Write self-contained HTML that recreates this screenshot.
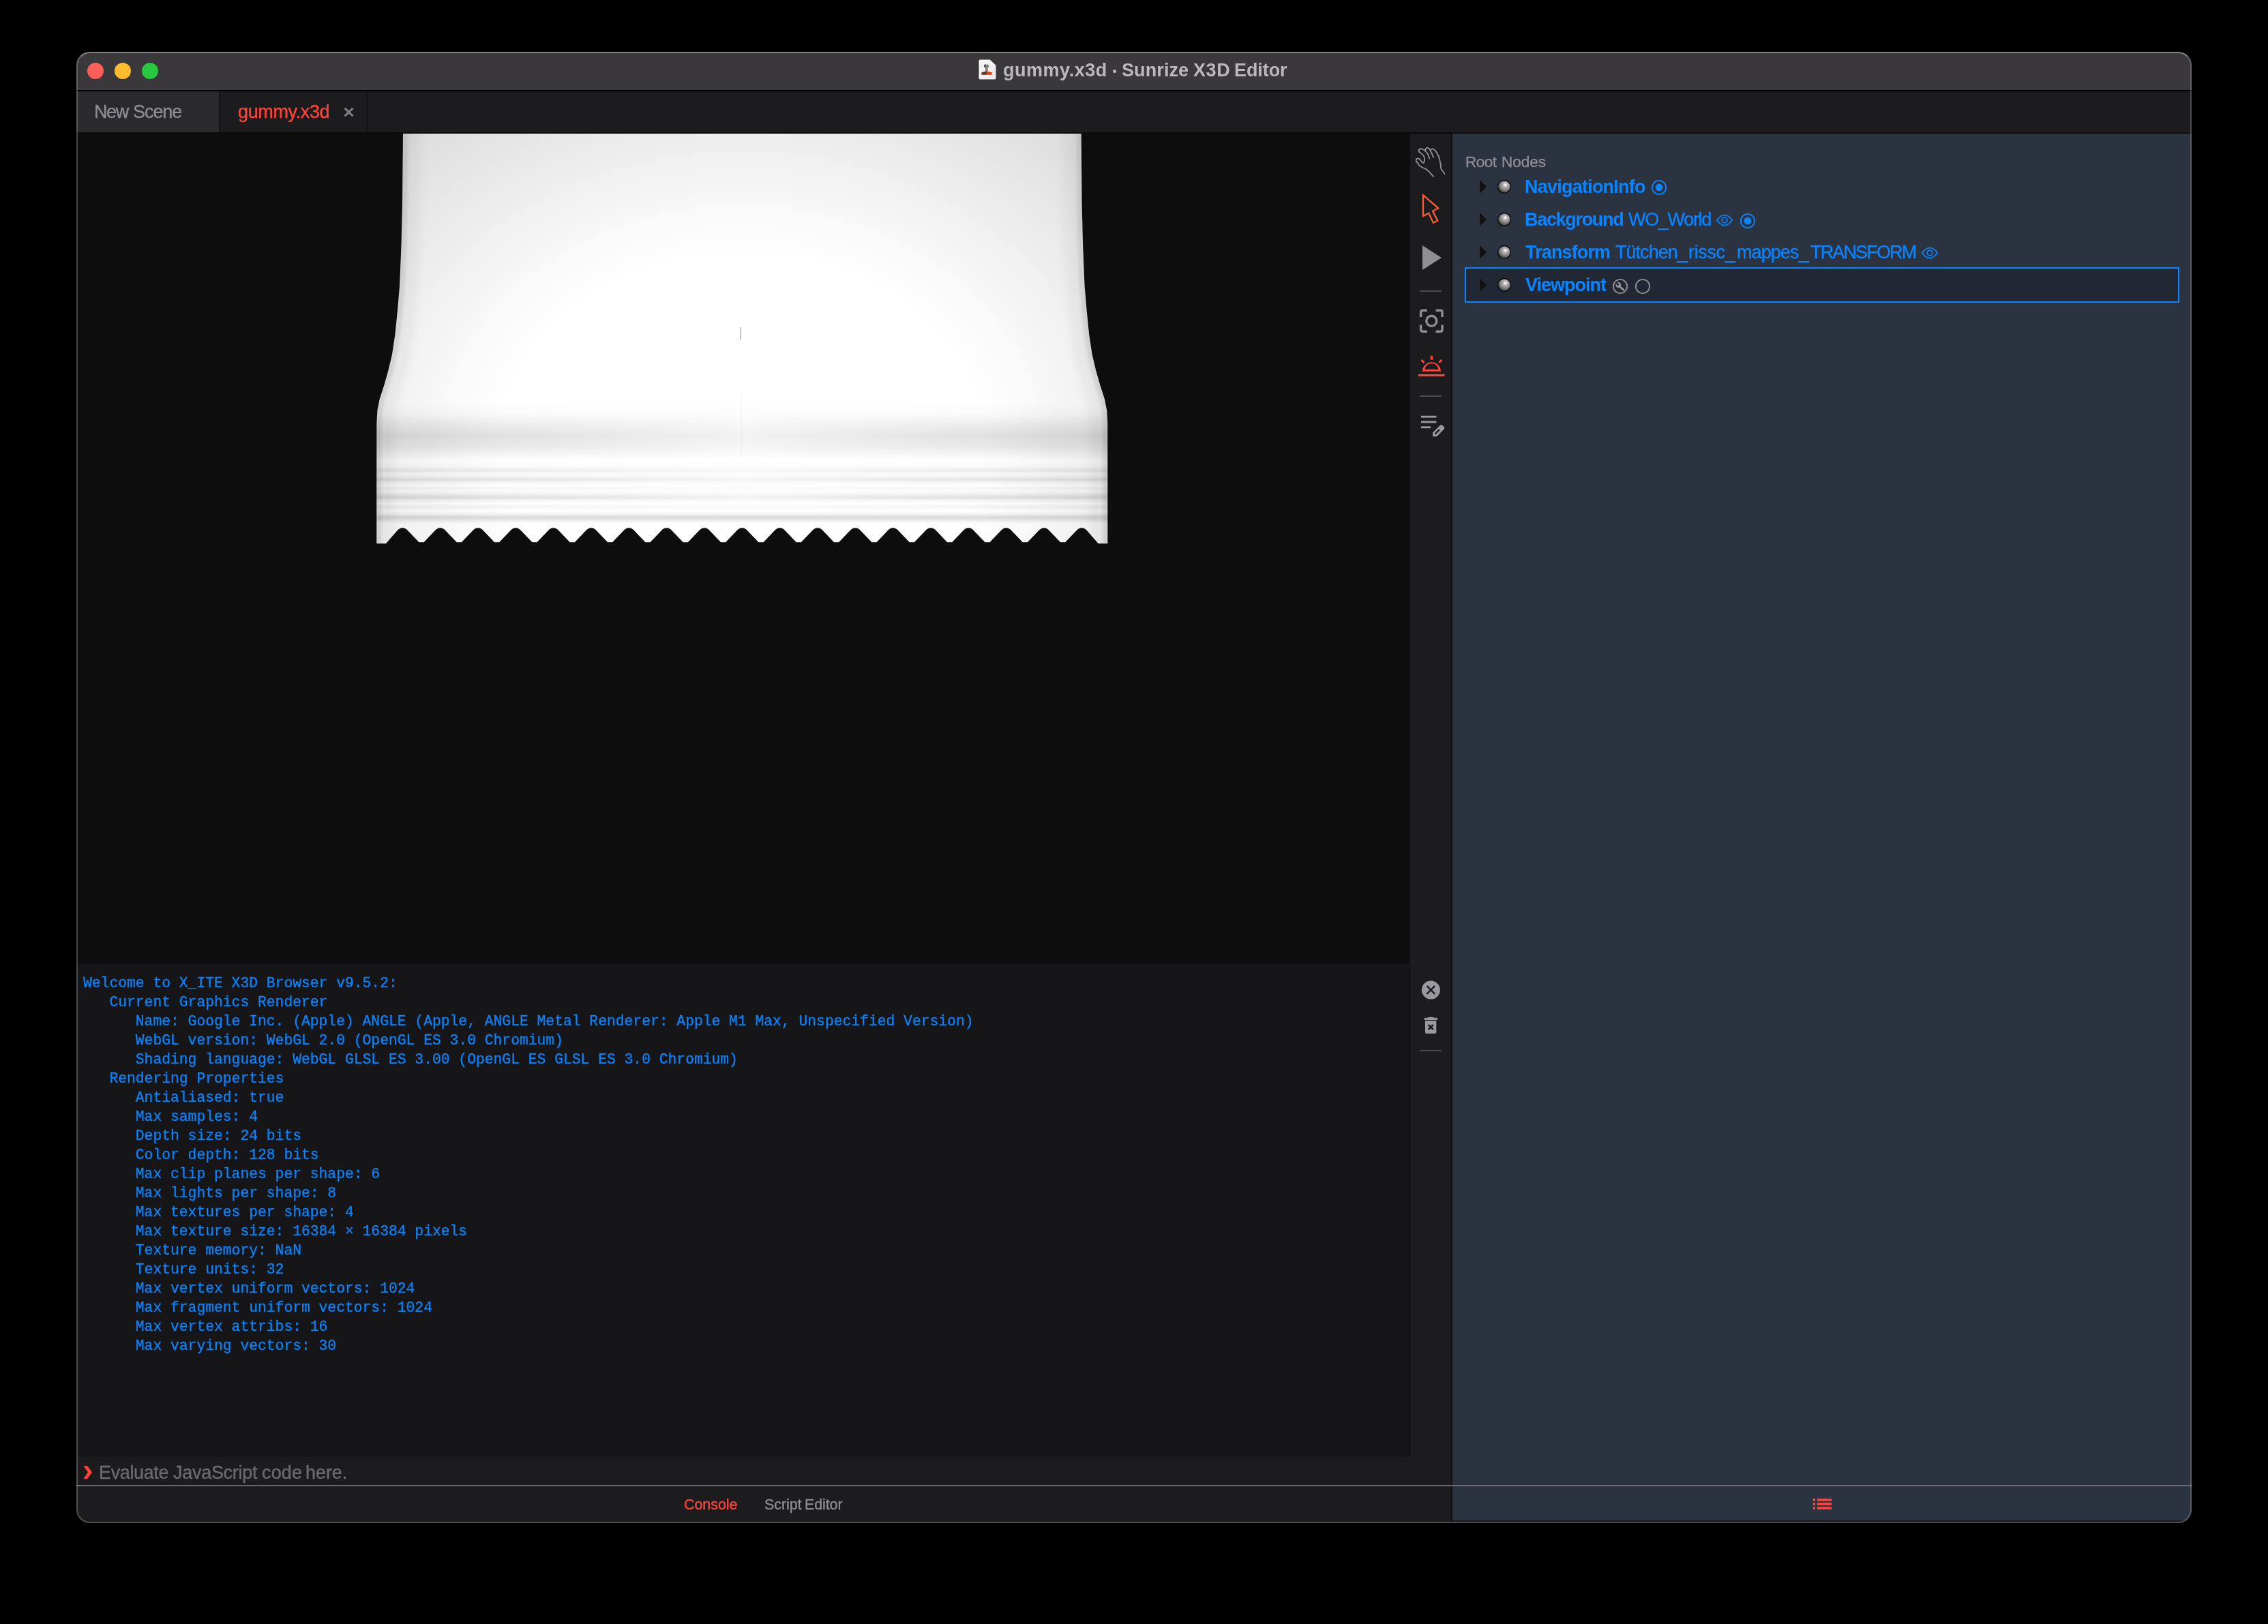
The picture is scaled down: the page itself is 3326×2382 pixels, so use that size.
<!DOCTYPE html>
<html><head><meta charset="utf-8"><title>gummy.x3d · Sunrize X3D Editor</title>
<style>
html,body{margin:0;padding:0;background:#000;}
body{width:3326px;height:2382px;overflow:hidden;position:relative;font-family:"Liberation Sans",sans-serif;}
#win{position:absolute;left:112px;top:76px;width:3102px;height:2158px;border-radius:20px;overflow:hidden;background:#1c1c1e;}
#in{position:absolute;left:-112px;top:-76px;width:3326px;height:2382px;}
.b{position:absolute;}
.t{position:absolute;white-space:pre;line-height:1;will-change:transform;}
.m{font-family:"Liberation Mono",monospace;}
svg{position:absolute;overflow:visible;}
#frame{position:absolute;left:112px;top:76px;width:3102px;height:2158px;border-radius:20px;box-sizing:border-box;border:2px solid rgba(255,255,255,0.225);border-top-color:rgba(255,255,255,0.36);pointer-events:none;}
</style></head><body>
<div id="win"><div id="in">

<div class="b" style="left:112px;top:76px;width:3102px;height:56px;background:#3a383b;"></div>
<div class="b" style="left:112px;top:132px;width:3102px;height:2px;background:linear-gradient(#000 0,#000 60%,#121213 100%);"></div>
<div class="b" style="left:112px;top:134px;width:3102px;height:60px;background:#1c1c1e;"></div>
<div class="b" style="left:112px;top:134px;width:209px;height:60px;background:#2a2a2c;"></div>
<div class="b" style="left:321px;top:134px;width:2px;height:60px;background:#111113;"></div>
<div class="b" style="left:538px;top:134px;width:2px;height:60px;background:#111113;"></div>
<div class="b" style="left:112px;top:194px;width:3102px;height:2px;background:#0c0c0d;"></div>
<div class="b" style="left:112px;top:194px;width:1956px;height:1220px;background:#0d0d0d;"></div>
<div class="b" style="left:112px;top:1413px;width:1954px;height:724px;background:#161618;border-top:1px solid #111112;box-sizing:border-box;"></div>
<div class="b" style="left:2068px;top:196px;width:60px;height:1982px;background:#1c1c1e;"></div>
<div class="b" style="left:2066px;top:1415px;width:2px;height:722px;background:#0f0f10;"></div>
<div class="b" style="left:2128px;top:196px;width:2px;height:2040px;background:#0e0e10;"></div>
<div class="b" style="left:2130px;top:196px;width:1084px;height:2040px;background:#2b3240;"></div>
<div class="b" style="left:2148px;top:392px;width:1048px;height:52px;box-sizing:border-box;border:2px solid #0a84ff;background:#212833;"></div>
<div class="b" style="left:112px;top:2137px;width:2016px;height:41px;background:#1c1c1e;"></div>
<div class="b" style="left:112px;top:2180px;width:2016px;height:56px;background:#1c1c1e;"></div>
<div class="b" style="left:112px;top:2178px;width:3102px;height:2px;background:#6b6b6b;"></div>
<div class="b" style="left:2130px;top:2230px;width:1084px;height:4px;background:#1b1b1d;"></div>
<div class="b" style="left:128px;top:92px;width:24px;height:24px;border-radius:12px;background:#ff5f57;"></div>
<div class="b" style="left:168px;top:92px;width:24px;height:24px;border-radius:12px;background:#febc2e;"></div>
<div class="b" style="left:208px;top:92px;width:24px;height:24px;border-radius:12px;background:#28c840;"></div>
<svg style="left:0;top:0;" width="3326" height="2382" viewBox="0 0 3326 2382">
<defs>
<clipPath id="bagc"><path d="M591.0,196.0 L590.0,300.0 L588.5,360.0 L586.0,420.0 L583.0,455.0 L579.5,490.0 L575.0,520.0 L569.0,545.0 L563.0,566.0 L556.8,585.0 L553.4,602.0 L552.4,620.0 L552.3,700.0 L552.3,780.0 L552.3,797.3 L566,797.3 L582.3,778.4 Q590.3,770.0 598.3,778.4 L614.4,795.3 L621.6,795.3 L637.6,778.4 Q645.6,770.0 653.6,778.4 L669.7,795.3 L676.9,795.3 L693.0,778.4 Q701.0,770.0 709.0,778.4 L725.0,795.3 L732.2,795.3 L748.3,778.4 Q756.3,770.0 764.3,778.4 L780.4,795.3 L787.6,795.3 L803.6,778.4 Q811.6,770.0 819.6,778.4 L835.7,795.3 L842.9,795.3 L859.0,778.4 Q867.0,770.0 875.0,778.4 L891.0,795.3 L898.2,795.3 L914.3,778.4 Q922.3,770.0 930.3,778.4 L946.4,795.3 L953.6,795.3 L969.6,778.4 Q977.6,770.0 985.6,778.4 L1001.7,795.3 L1008.9,795.3 L1025.0,778.4 Q1033.0,770.0 1041.0,778.4 L1057.0,795.3 L1064.2,795.3 L1080.3,778.4 Q1088.3,770.0 1096.3,778.4 L1112.4,795.3 L1119.6,795.3 L1135.6,778.4 Q1143.6,770.0 1151.6,778.4 L1167.7,795.3 L1174.9,795.3 L1191.0,778.4 Q1199.0,770.0 1207.0,778.4 L1223.0,795.3 L1230.2,795.3 L1246.3,778.4 Q1254.3,770.0 1262.3,778.4 L1278.4,795.3 L1285.6,795.3 L1301.6,778.4 Q1309.6,770.0 1317.6,778.4 L1333.7,795.3 L1340.9,795.3 L1357.0,778.4 Q1365.0,770.0 1373.0,778.4 L1389.0,795.3 L1396.2,795.3 L1412.3,778.4 Q1420.3,770.0 1428.3,778.4 L1444.4,795.3 L1451.6,795.3 L1467.6,778.4 Q1475.6,770.0 1483.6,778.4 L1499.7,795.3 L1506.9,795.3 L1523.0,778.4 Q1531.0,770.0 1539.0,778.4 L1555.0,795.3 L1562.2,795.3 L1578.3,778.4 Q1586.3,770.0 1594.3,778.4 L1610.6,797.3 L1624.3,797.3 L1624.3,780.0 L1624.3,700.0 L1624.2,620.0 L1623.2,602.0 L1619.8,585.0 L1613.6,566.0 L1607.6,545.0 L1601.6,520.0 L1597.1,490.0 L1593.6,455.0 L1590.6,420.0 L1588.1,360.0 L1586.6,300.0 L1585.6,196.0 Z"/></clipPath>
<radialGradient id="rg" gradientUnits="userSpaceOnUse" cx="1088" cy="660" r="100" gradientTransform="translate(1088 660) scale(8.26 6.66) translate(-1088 -660)"><stop offset="0" stop-color="#fff"/><stop offset="0.43" stop-color="#fff"/><stop offset="0.5" stop-color="#fbfbfb"/><stop offset="1" stop-color="#d6d6d6"/></radialGradient>
<linearGradient id="fadeh" gradientUnits="userSpaceOnUse" x1="552" y1="0" x2="1625" y2="0"><stop offset="0" stop-color="#fff" stop-opacity="1"/><stop offset="0.2" stop-color="#fff" stop-opacity="0.85"/><stop offset="0.5" stop-color="#fff" stop-opacity="0.38"/><stop offset="0.8" stop-color="#fff" stop-opacity="0.85"/><stop offset="1" stop-color="#fff" stop-opacity="1"/></linearGradient>
<mask id="mh" maskUnits="userSpaceOnUse" x="500" y="190" width="1200" height="620"><rect x="500" y="190" width="1200" height="620" fill="url(#fadeh)"/></mask>
<linearGradient id="stripes" gradientUnits="userSpaceOnUse" x1="0" y1="590" x2="0" y2="770">
<stop offset="0.0000" stop-color="#000" stop-opacity="0.000"/>
<stop offset="0.0889" stop-color="#000" stop-opacity="0.020"/>
<stop offset="0.1778" stop-color="#000" stop-opacity="0.080"/>
<stop offset="0.2722" stop-color="#000" stop-opacity="0.135"/>
<stop offset="0.3611" stop-color="#000" stop-opacity="0.100"/>
<stop offset="0.4333" stop-color="#000" stop-opacity="0.040"/>
<stop offset="0.4778" stop-color="#000" stop-opacity="0.000"/>
<stop offset="0.5222" stop-color="#000" stop-opacity="0.020"/>
<stop offset="0.5556" stop-color="#000" stop-opacity="0.090"/>
<stop offset="0.5833" stop-color="#000" stop-opacity="0.020"/>
<stop offset="0.6056" stop-color="#000" stop-opacity="0.050"/>
<stop offset="0.6278" stop-color="#000" stop-opacity="0.120"/>
<stop offset="0.6556" stop-color="#000" stop-opacity="0.040"/>
<stop offset="0.6778" stop-color="#000" stop-opacity="0.000"/>
<stop offset="0.7000" stop-color="#000" stop-opacity="0.050"/>
<stop offset="0.7222" stop-color="#000" stop-opacity="0.010"/>
<stop offset="0.7500" stop-color="#000" stop-opacity="0.070"/>
<stop offset="0.7750" stop-color="#000" stop-opacity="0.140"/>
<stop offset="0.8000" stop-color="#000" stop-opacity="0.050"/>
<stop offset="0.8222" stop-color="#000" stop-opacity="0.000"/>
<stop offset="0.8500" stop-color="#000" stop-opacity="0.050"/>
<stop offset="0.8778" stop-color="#000" stop-opacity="0.010"/>
<stop offset="0.8944" stop-color="#000" stop-opacity="0.000"/>
</linearGradient>
<linearGradient id="last" gradientUnits="userSpaceOnUse" x1="0" y1="750" x2="0" y2="768"><stop offset="0" stop-color="#000" stop-opacity="0"/><stop offset="0.25" stop-color="#000" stop-opacity="0.05"/><stop offset="0.5" stop-color="#000" stop-opacity="0.15"/><stop offset="0.72" stop-color="#000" stop-opacity="0.08"/><stop offset="1" stop-color="#000" stop-opacity="0"/></linearGradient>
<filter id="bl1" x="-50%" y="-5%" width="200%" height="110%"><feGaussianBlur stdDeviation="2.2 2"/></filter>
<filter id="bl2" x="-50%" y="-5%" width="200%" height="110%"><feGaussianBlur stdDeviation="6 4"/></filter>
</defs>
<g clip-path="url(#bagc)">
<rect x="540" y="190" width="1100" height="620" fill="url(#rg)"/>
<g mask="url(#mh)"><rect x="540" y="590" width="1100" height="180" fill="url(#stripes)"/></g>
<rect x="540" y="750" width="1100" height="18" fill="url(#last)"/>
<g filter="url(#bl1)" fill="none" stroke="#000" stroke-opacity="0.085" stroke-width="15">
<path d="M591.0,190.0 L590.0,300.0 L588.5,360.0 L586.0,420.0 L583.0,455.0 L579.5,490.0 L575.0,520.0 L569.0,545.0 L563.0,566.0 L556.8,585.0 L553.4,602.0 L552.4,620.0 L552.3,700.0 L552.3,780.0 L552.3,800.0"/><path d="M1585.6,190.0 L1586.6,300.0 L1588.1,360.0 L1590.6,420.0 L1593.6,455.0 L1597.1,490.0 L1601.6,520.0 L1607.6,545.0 L1613.6,566.0 L1619.8,585.0 L1623.2,602.0 L1624.2,620.0 L1624.3,700.0 L1624.3,780.0 L1624.3,800.0"/>
</g>
<g fill="none" stroke="#000" stroke-opacity="0.04" stroke-width="52" filter="url(#bl2)">
<path d="M591.0,190.0 L590.0,300.0 L588.5,360.0 L586.0,420.0 L583.0,455.0 L579.5,490.0 L575.0,520.0 L569.0,545.0 L563.0,566.0 L556.8,585.0 L553.4,602.0 L552.4,620.0 L552.3,700.0 L552.3,780.0 L552.3,800.0"/><path d="M1585.6,190.0 L1586.6,300.0 L1588.1,360.0 L1590.6,420.0 L1593.6,455.0 L1597.1,490.0 L1601.6,520.0 L1607.6,545.0 L1613.6,566.0 L1619.8,585.0 L1623.2,602.0 L1624.2,620.0 L1624.3,700.0 L1624.3,780.0 L1624.3,800.0"/>
</g>
<rect x="1085.5" y="480" width="1.4" height="18" fill="#a8a8a8"/>
<rect x="1086.5" y="576" width="1" height="93" fill="#000" fill-opacity="0.04"/>
</g>
</svg>
<span class="t" id="ti1" style="left:1471.40px;top:90.00px;font-size:27.00px;letter-spacing:0.525px;font-weight:bold;color:#bab8bc;">gummy.x3d</span>
<span class="t" id="ti2" style="left:1644.80px;top:90.00px;font-size:27.00px;letter-spacing:0.100px;font-weight:bold;color:#bab8bc;">Sunrize</span>
<span class="t" id="ti3" style="left:1750.40px;top:90.00px;font-size:27.00px;letter-spacing:0.600px;font-weight:bold;color:#bab8bc;">X3D</span>
<span class="t" id="ti4" style="left:1810.30px;top:90.00px;font-size:27.00px;letter-spacing:-0.080px;font-weight:bold;color:#bab8bc;">Editor</span>
<span class="t" id="ta1" style="left:137.60px;top:151.11px;font-size:27.00px;letter-spacing:-1.400px;-webkit-text-stroke:0.35px #8e8e93;color:#8e8e93;">New</span>
<span class="t" id="ta2" style="left:195.30px;top:151.11px;font-size:27.00px;letter-spacing:-1.050px;-webkit-text-stroke:0.35px #8e8e93;color:#8e8e93;">Scene</span>
<span class="t" id="tab2" style="left:348.90px;top:151.00px;font-size:27.00px;letter-spacing:-0.375px;-webkit-text-stroke:0.35px #ff453a;color:#ff453a;">gummy.x3d</span>
<span class="t" id="ro1" style="left:2149.40px;top:227.00px;font-size:22.50px;letter-spacing:-0.467px;-webkit-text-stroke:0.35px #8e8e93;color:#8e8e93;">Root</span>
<span class="t" id="ro2" style="left:2201.70px;top:227.00px;font-size:22.50px;letter-spacing:0.000px;-webkit-text-stroke:0.35px #8e8e93;color:#8e8e93;">Nodes</span>
<span class="t" id="r1b" style="left:2235.50px;top:261.00px;font-size:27.00px;letter-spacing:-0.769px;font-weight:bold;color:#0a84ff;">NavigationInfo</span>
<span class="t" id="r2b" style="left:2235.50px;top:309.00px;font-size:27.00px;letter-spacing:-1.311px;font-weight:bold;color:#0a84ff;">Background</span>
<span class="t" id="r2n" style="left:2387.50px;top:309.00px;font-size:27.00px;letter-spacing:-1.314px;-webkit-text-stroke:0.35px #0a84ff;color:#0a84ff;">WO_World</span>
<span class="t" id="r3b" style="left:2237.00px;top:357.00px;font-size:27.00px;letter-spacing:-0.875px;font-weight:bold;color:#0a84ff;">Transform</span>
<span class="t" id="r3n1" style="left:2369.20px;top:357.00px;font-size:27.00px;letter-spacing:-0.971px;-webkit-text-stroke:0.35px #0a84ff;color:#0a84ff;">Tütchen_</span>
<span class="t" id="r3n2" style="left:2476.20px;top:357.00px;font-size:27.00px;letter-spacing:-0.360px;-webkit-text-stroke:0.35px #0a84ff;color:#0a84ff;">rissc_</span>
<span class="t" id="r3n3" style="left:2546.60px;top:357.00px;font-size:27.00px;letter-spacing:-0.933px;-webkit-text-stroke:0.35px #0a84ff;color:#0a84ff;">mappes_</span>
<span class="t" id="r3n4" style="left:2654.70px;top:357.00px;font-size:27.00px;letter-spacing:-1.850px;-webkit-text-stroke:0.35px #0a84ff;color:#0a84ff;">TRANSFORM</span>
<span class="t" id="r4b" style="left:2237.00px;top:405.00px;font-size:27.00px;letter-spacing:-1.000px;font-weight:bold;color:#0a84ff;">Viewpoint</span>
<span class="t" id="ph1" style="left:144.90px;top:2146.61px;font-size:27.00px;letter-spacing:-0.371px;-webkit-text-stroke:0.35px #6c6c70;color:#6c6c70;">Evaluate</span>
<span class="t" id="ph2" style="left:253.50px;top:2146.61px;font-size:27.00px;letter-spacing:-0.289px;-webkit-text-stroke:0.35px #6c6c70;color:#6c6c70;">JavaScript</span>
<span class="t" id="ph3" style="left:384.30px;top:2146.61px;font-size:27.00px;letter-spacing:0.133px;-webkit-text-stroke:0.35px #6c6c70;color:#6c6c70;">code</span>
<span class="t" id="ph4" style="left:447.90px;top:2146.61px;font-size:27.00px;letter-spacing:-0.050px;-webkit-text-stroke:0.35px #6c6c70;color:#6c6c70;">here.</span>
<span class="t" id="bt1" style="left:1003.00px;top:2197.01px;font-size:21.50px;letter-spacing:-0.067px;-webkit-text-stroke:0.35px #ff453a;color:#ff453a;">Console</span>
<span class="t" id="bs1" style="left:1120.60px;top:2197.01px;font-size:21.50px;letter-spacing:-0.080px;-webkit-text-stroke:0.35px #8e8e93;color:#8e8e93;">Script</span>
<span class="t" id="bs2" style="left:1180.30px;top:2197.01px;font-size:21.50px;letter-spacing:-0.120px;-webkit-text-stroke:0.35px #8e8e93;color:#8e8e93;">Editor</span>
<div class="b" style="left:1631.85px;top:101.65px;width:5.5px;height:5.5px;border-radius:50%;background:#bab8bc;"></div>
<div class="t m" id="con" style="left:122.30px;top:1427.61px;font-size:21.333px;line-height:28px;color:#0a84ff;-webkit-text-stroke:0.3px #0a84ff;">Welcome to X_ITE X3D Browser v9.5.2:
   Current Graphics Renderer
      Name: Google Inc. (Apple) ANGLE (Apple, ANGLE Metal Renderer: Apple M1 Max, Unspecified Version)
      WebGL version: WebGL 2.0 (OpenGL ES 3.0 Chromium)
      Shading language: WebGL GLSL ES 3.00 (OpenGL ES GLSL ES 3.0 Chromium)
   Rendering Properties
      Antialiased: true
      Max samples: 4
      Depth size: 24 bits
      Color depth: 128 bits
      Max clip planes per shape: 6
      Max lights per shape: 8
      Max textures per shape: 4
      Max texture size: 16384 × 16384 pixels
      Texture memory: NaN
      Texture units: 32
      Max vertex uniform vectors: 1024
      Max fragment uniform vectors: 1024
      Max vertex attribs: 16
      Max varying vectors: 30</div>
<svg style="left:1425px;top:80px;" width="50" height="45" viewBox="0 0 1804 1624"><defs><linearGradient id="pg" x1="0" y1="0" x2="1" y2="1"><stop offset="0" stop-color="#f6f6f6"/><stop offset="1" stop-color="#e9e9e9"/></linearGradient></defs><path d="M440,285 H960 L1265,570 V1255 Q1265,1300 1220,1300 H440 Q395,1300 395,1255 V330 Q395,285 440,285 Z" fill="url(#pg)" stroke="#fff" stroke-width="26"/><path d="M960,285 L1265,570 H1010 Q960,570 960,520 Z" fill="#fdfdfd" stroke="#d0d0d0" stroke-width="14"/><path d="M660,560 Q660,520 720,520 H850 Q900,520 900,570 V650 Q900,690 860,690 V880 H730 V700 L660,660 Z" fill="#85877b"/><path d="M660,560 Q660,520 720,520 H740 V880 H730 V700 L660,660 Z" fill="#3c4340"/><path d="M520,950 L740,880 H775 V1075 H520 Z" fill="#6b3420"/><path d="M775,880 H830 L1075,950 V1075 H775 Z" fill="#e9421b"/><rect x="762" y="880" width="22" height="195" fill="#3a2218"/></svg>
<svg style="left:500px;top:153px;" width="24" height="24" viewBox="0 0 24 24"><path d="M5.6,5.6 L17.6,17.4 M17.6,5.6 L5.6,17.4" stroke="#7d7d82" stroke-width="3.1" fill="none"/></svg>
<svg style="left:2065px;top:205px;" width="70" height="65" viewBox="0 0 1749 1624"><g fill="none" stroke="#909095" stroke-width="46" stroke-linecap="round" stroke-linejoin="round"><path d="M925,1345 L735,1135 Q690,1085 620,1058 Q520,1020 450,975 Q390,930 365,870 Q320,820 295,775 Q285,720 320,695 Q360,672 410,705 Q450,735 485,790 Q520,845 555,850 Q590,845 597,760 Q605,690 585,625 Q560,560 500,515 Q440,470 400,440 Q380,400 400,365 Q430,330 480,332 Q540,340 600,380 Q680,440 730,540 Q765,620 775,690"/><path d="M625,395 Q635,320 690,292 Q735,285 775,335 Q830,410 870,500 Q900,570 925,640"/><path d="M815,385 Q835,340 890,335 Q945,340 990,390 Q1060,470 1110,590 Q1160,720 1185,870 Q1200,980 1205,1050 Q1215,1095 1250,1130 Q1300,1190 1340,1255"/></g></svg>
<svg style="left:2065px;top:270px;" width="70" height="65" viewBox="0 0 1749 1624"><path d="M550,405 L1105,882 L900,990 L1080,1340 L922,1420 L752,1062 L550,1172 Z" fill="none" stroke="#ff5e33" stroke-width="56" stroke-linejoin="miter"/></svg>
<svg style="left:2080px;top:355px;" width="40" height="46" viewBox="0 0 40 46"><path d="M6,5 L6,41 L34,23 Z" fill="#8e8e93"/></svg>
<div class="b" style="left:2082px;top:426px;width:32px;height:2px;background:#4b4b4e;"></div>
<div class="b" style="left:2082px;top:580px;width:32px;height:2px;background:#4b4b4e;"></div>
<div class="b" style="left:2082px;top:1540px;width:32px;height:2px;background:#4b4b4e;"></div>
<svg style="left:2075px;top:447px;" width="48" height="48" viewBox="0 0 48 48"><g fill="none" stroke="#8e8e93" stroke-width="3.4"><path d="M8.6,18 V11 Q8.6,8.3 11.3,8.3 H18"/><path d="M30.6,8.3 H37.3 Q40,8.3 40,11 V18"/><path d="M40,29.6 V36.6 Q40,39.3 37.3,39.3 H30.6"/><path d="M18,39.3 H11.3 Q8.6,39.3 8.6,36.6 V29.6"/><circle cx="24.3" cy="23.8" r="7.5"/></g></svg>
<svg style="left:2065px;top:505px;" width="70" height="65" viewBox="0 0 1749 1624"><g fill="#ff453a"><rect x="375" y="1098" width="965" height="78"/><path d="M523,995 A337,337 0 0 1 1197,995 Z M608,917 H1112 A255,255 0 0 0 608,917 Z" fill-rule="evenodd"/><rect x="820" y="420" width="80" height="150"/><path d="M462,592 L512,545 L610,650 L560,697 Z"/><path d="M1258,592 L1208,545 L1110,650 L1160,697 Z"/></g></svg>
<svg style="left:2065px;top:595px;" width="70" height="65" viewBox="0 0 1749 1624"><g fill="#98989d"><rect x="475" y="368" width="560" height="72"/><rect x="475" y="563" width="560" height="72"/><rect x="475" y="758" width="355" height="72"/><path d="M900,985 L1165,722 Q1215,680 1265,722 L1315,772 Q1355,820 1315,865 L1050,1130 H900 Z"/></g><path d="M1000,1022 L1135,892" stroke="#1c1c1e" stroke-width="62" stroke-linecap="round" fill="none"/></svg>
<svg style="left:2065px;top:1430px;" width="70" height="100" viewBox="0 0 1137 1624"><circle cx="542" cy="358" r="220" fill="#98989d"/><path d="M447,263 L637,453 M637,263 L447,453" stroke="#1c1c1e" stroke-width="38" fill="none"/><g fill="#98989d"><path d="M388,1020 H470 Q480,1003 500,1003 H585 Q602,1003 612,1020 H698 V1072 H388 Z"/><path d="M405,1090 H672 V1355 Q672,1398 630,1398 H447 Q405,1398 405,1355 Z"/></g><path d="M483,1188 L597,1302 M597,1188 L483,1302" stroke="#1c1c1e" stroke-width="42" fill="none"/></svg>
<svg style="left:0;top:0" width="0" height="0"><defs><radialGradient id="sph" cx="0.58" cy="0.36" r="0.66" fx="0.58" fy="0.36"><stop offset="0.000" stop-color="#ffffff"/><stop offset="0.091" stop-color="#eeeeee"/><stop offset="0.273" stop-color="#b4b4b4"/><stop offset="0.455" stop-color="#989898"/><stop offset="0.606" stop-color="#828282"/><stop offset="0.727" stop-color="#6a6a6a"/><stop offset="0.848" stop-color="#505050"/><stop offset="0.939" stop-color="#383838"/><stop offset="1.000" stop-color="#262626"/></radialGradient></defs></svg>
<svg style="left:2160px;top:260px;" width="60" height="28" viewBox="0 0 60 28"><path d="M10,4 L10,24 L20.3,14 Z" fill="#121214"/><circle cx="46" cy="13.9" r="9.4" fill="url(#sph)" stroke="#060606" stroke-width="1.3"/></svg>
<svg style="left:2160px;top:308px;" width="60" height="28" viewBox="0 0 60 28"><path d="M10,4 L10,24 L20.3,14 Z" fill="#121214"/><circle cx="46" cy="13.9" r="9.4" fill="url(#sph)" stroke="#060606" stroke-width="1.3"/></svg>
<svg style="left:2160px;top:356px;" width="60" height="28" viewBox="0 0 60 28"><path d="M10,4 L10,24 L20.3,14 Z" fill="#121214"/><circle cx="46" cy="13.9" r="9.4" fill="url(#sph)" stroke="#060606" stroke-width="1.3"/></svg>
<svg style="left:2160px;top:404px;" width="60" height="28" viewBox="0 0 60 28"><path d="M10,4 L10,24 L20.3,14 Z" fill="#121214"/><circle cx="46" cy="13.9" r="9.4" fill="url(#sph)" stroke="#060606" stroke-width="1.3"/></svg>
<svg style="left:2417.6px;top:260.4px;" width="30" height="30" viewBox="0 0 30 30"><circle cx="15" cy="15" r="10.15" fill="none" stroke="#0a84ff" stroke-width="1.9"/><circle cx="15" cy="15" r="5.4" fill="#0a84ff"/></svg>
<svg style="left:2514.4px;top:311.1px;" width="30" height="24" viewBox="0 0 30 24"><g fill="none" stroke="#0a84ff" stroke-width="1.8" stroke-linejoin="round"><path d="M3.7,12 Q15,-3.2 26.3,12 Q15,27.2 3.7,12 Z"/><circle cx="15" cy="12" r="3.8"/></g></svg>
<svg style="left:2547.9px;top:308.6px;" width="30" height="30" viewBox="0 0 30 30"><circle cx="15" cy="15" r="10.15" fill="none" stroke="#0a84ff" stroke-width="1.9"/><circle cx="15" cy="15" r="5.4" fill="#0a84ff"/></svg>
<svg style="left:2814.5px;top:359.1px;" width="30" height="24" viewBox="0 0 30 24"><g fill="none" stroke="#0a84ff" stroke-width="1.8" stroke-linejoin="round"><path d="M3.7,12 Q15,-3.2 26.3,12 Q15,27.2 3.7,12 Z"/><circle cx="15" cy="12" r="3.8"/></g></svg>
<svg style="left:2360.9px;top:404.6px;" width="30" height="30" viewBox="0 0 30 30"><circle cx="15" cy="15" r="10.15" fill="none" stroke="#8e8e93" stroke-width="1.9"/><path d="M13.6,14.9 L19.9,20.0" stroke="#8e8e93" stroke-width="2.9" stroke-linecap="round" fill="none"/><circle cx="12.3" cy="13.0" r="3.9" fill="#8e8e93"/><path d="M12.5,13.1 L8.6,8.6" stroke="#212833" stroke-width="2.5" fill="none"/></svg>
<svg style="left:2394px;top:404.6px;" width="30" height="30" viewBox="0 0 30 30"><circle cx="15" cy="15" r="10.15" fill="none" stroke="#8e8e93" stroke-width="1.9"/></svg>
<svg style="left:112px;top:2135px;" width="70" height="50" viewBox="0 0 2268 1620"><path d="M340,485 H515 L750,795 L515,1105 H340 L548,795 Z" fill="#ff453a"/></svg>
<svg style="left:2650px;top:2190px;" width="44" height="32" viewBox="0 0 44 32"><g fill="#ff453a"><rect x="8.7" y="8.2" width="3.4" height="3.7"/><rect x="14.7" y="8.2" width="21.3" height="3.7"/><rect x="8.7" y="14.1" width="3.4" height="3.7"/><rect x="14.7" y="14.1" width="21.3" height="3.7"/><rect x="8.7" y="20.1" width="3.4" height="3.7"/><rect x="14.7" y="20.1" width="21.3" height="3.7"/></g></svg>
</div></div><div id="frame"></div>
</body></html>
